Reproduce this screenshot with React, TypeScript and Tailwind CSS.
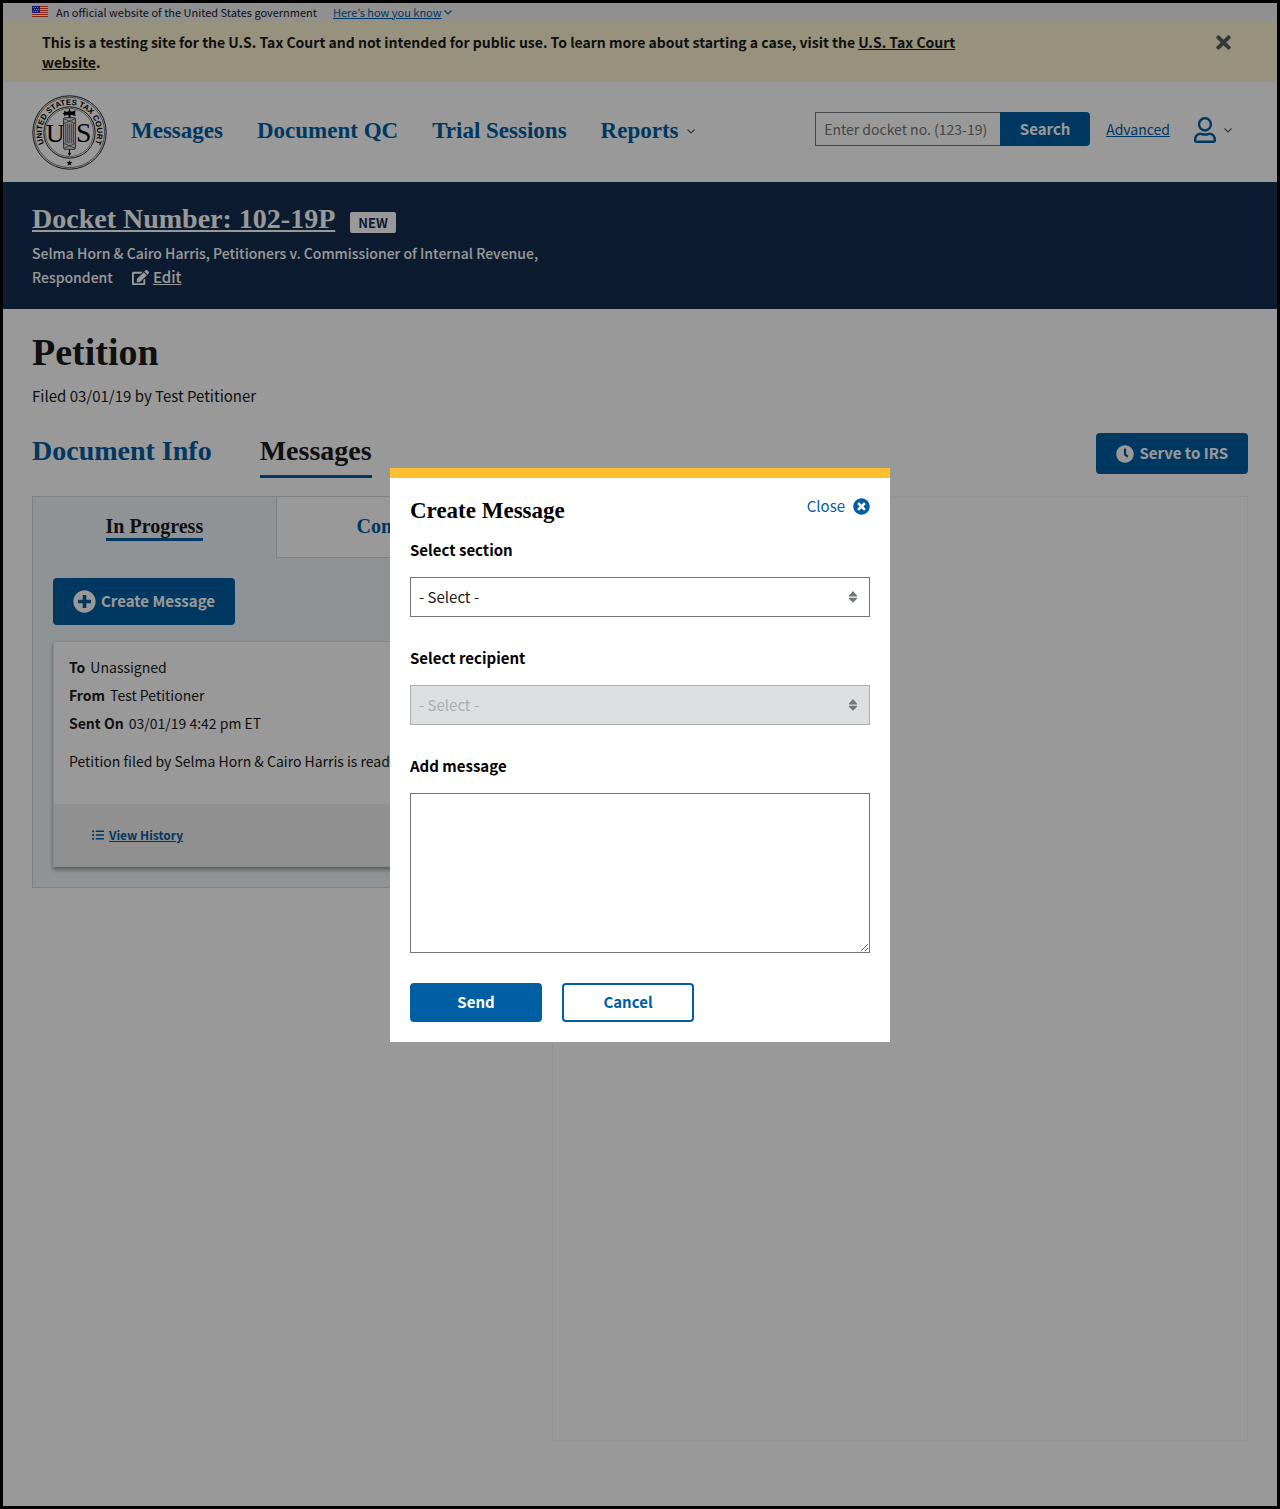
import type { ReactNode } from 'react';
import {
  FaClock,
  FaEdit,
  FaListUl,
  FaPlusCircle,
  FaRegUser,
  FaTimes,
  FaTimesCircle,
} from 'react-icons/fa';

function Chevron({ className }: { className: string }) {
  return (
    <svg className={className} viewBox="0 0 8 5" fill="none" stroke="currentColor" strokeWidth="1.1" aria-hidden="true">
      <path d="M0.5 0.5 L4 4 L7.5 0.5" />
    </svg>
  );
}

function Flag() {
  return (
    <svg className="mb-px h-[11px] w-4 shrink-0" viewBox="0 0 16 11" shapeRendering="crispEdges" aria-hidden="true">
      <rect width="16" height="11" fill="#fff" />
      {[0, 2, 4, 6, 8, 10].map((y) => (
        <rect key={y} y={y} width="16" height="1" fill="#db3e1f" />
      ))}
      <rect width="8" height="7" fill="#1e33b1" />
      {[1, 3, 5].map((y) =>
        [1, 3, 5].map((x) => <rect key={`${x}-${y}`} x={x + (y === 3 ? 1 : 0)} y={y} width="1" height="1" fill="#cfd6f5" />),
      )}
    </svg>
  );
}

function Seal() {
  return (
    <svg className="size-[75px] shrink-0" viewBox="0 0 76 76" role="img" aria-label="United States Tax Court seal">
      <defs>
        <path id="seal-ring" d="M 15.1 54.1 A 28 28 0 1 1 60.9 54.1" />
      </defs>
      <g fill="none" stroke="#1b1b1b">
        <circle cx="38" cy="38" r="37.2" strokeWidth="1" />
        <circle cx="38" cy="38" r="35.6" strokeWidth="0.6" />
        <circle cx="38" cy="38" r="26" strokeWidth="1" />
        <circle cx="38" cy="38" r="24.4" strokeWidth="0.5" />
      </g>
      <text fontFamily="Liberation Sans" fontWeight="700" fontSize="8" fill="#000">
        <textPath href="#seal-ring" startOffset="50%" textAnchor="middle">
          UNITED STATES TAX COURT
        </textPath>
      </text>
      <text x="23.5" y="47.5" textAnchor="middle" fontFamily="Liberation Serif" fontSize="26" fill="#000">
        U
      </text>
      <text x="52.5" y="47.5" textAnchor="middle" fontFamily="Liberation Serif" fontSize="28" fill="#000">
        S
      </text>
      <rect x="32" y="23" width="12" height="32" rx="1.5" fill="#e4e4e4" stroke="#333" strokeWidth="0.9" />
      <path
        d="M34.2 29v20M36.2 29v20M38.2 29v20M40.2 29v20M42 29v20M32 24l12 5M44 24l-12 5M32 49l12 5M44 49l-12 5"
        stroke="#333"
        strokeWidth="0.7"
        fill="none"
      />
      <path d="M38 13.5l1.2 3.2h1.8l3.2-1.2c-.6 2-.6 4.4 0 6l-3.2-1.2h-2v2.500h-2v-2.500h-2l-2.500 1-.2-1.600-1.300-.9 1.300-.9.2-1.600 2.500.6h1.600z" fill="#000" />
      <path d="M37.5 55h1v3l1.200 1.300-1.700 2.200-1.700-2.200 1.200-1.300z" fill="#000" />
      <path d="M38 66l.8 2h2.200l-1.700 1.400.6 2.200-1.900-1.300-1.900 1.300.6-2.200-1.700-1.400h2.200z" fill="#000" />
    </svg>
  );
}

function SortArrows() {
  return (
    <svg className="pointer-events-none absolute top-3.5 right-[13px] h-3 w-2" viewBox="0 0 8 12" fill="#71767a" aria-hidden="true">
      <path d="M4 0L8 4.6v.9H0v-.9zM0 6.800h8v.9L4 11.700 0 7.700z" />
    </svg>
  );
}

function NavLink({ children }: { children: ReactNode }) {
  return (
    <a href="#" className="flex items-center gap-2 text-[#005ea2]">
      {children}
    </a>
  );
}

function SelectField({ id, label, disabled = false }: { id: string; label: string; disabled?: boolean }) {
  return (
    <div className="mb-[30px]">
      <label htmlFor={id} className="mb-4 block leading-[22px] font-bold">
        {label}
      </label>
      <div className="relative">
        <select
          id={id}
          disabled={disabled}
          className="block h-10 w-full appearance-none border border-[#71767a] bg-white px-2 pt-0.5 text-[15px] text-[#1b1b1b] opacity-100 disabled:border-[#a9aeb1] disabled:bg-[#dcdee0] disabled:text-[#a9aeb1]"
        >
          <option>- Select -</option>
        </select>
        <SortArrows />
      </div>
    </div>
  );
}

function CreateMessageDialog() {
  return (
    <div className="fixed inset-0 flex items-center justify-center bg-black/40">
      <div
        role="dialog"
        aria-modal="true"
        aria-labelledby="dialog-title"
        className="w-full max-w-[500px] border-t-10 border-[#ffbe2e] bg-white p-5 text-[15px] text-black"
      >
        <div className="mb-[15px] flex items-start justify-between">
          <h3 id="dialog-title" className="font-['Liberation_Serif',serif] text-[23px] leading-[26px] font-bold">
            Create Message
          </h3>
          <button type="button" className="flex items-center gap-2 leading-4 text-[#005ea2]">
            Close
            <FaTimesCircle className="size-[17px]" />
          </button>
        </div>
        <SelectField id="section" label="Select section" />
        <SelectField id="recipient" label="Select recipient" disabled />
        <label htmlFor="message" className="mb-4 block leading-[22px] font-bold">
          Add message
        </label>
        <textarea id="message" className="block h-40 w-full resize border border-[#71767a] bg-white p-2" />
        <div className="mt-[30px] flex gap-5 leading-[33px] font-bold">
          <button type="button" className="w-[132px] rounded border-2 border-[#005ea2] bg-[#005ea2] pb-0.5 text-white">
            Send
          </button>
          <button type="button" className="w-[132px] rounded border-2 border-[#005ea2] pb-0.5 text-[#005ea2]">
            Cancel
          </button>
        </div>
      </div>
    </div>
  );
}

function Header() {
  return (
    <header>
      <div className="flex h-[19px] items-center bg-[#f0f0f0] px-[29px] pb-px text-[11px]">
        <Flag />
        <p className="ml-2">An official website of the United States government</p>
        <button type="button" className="ml-4 flex items-center gap-0.5 text-[#005ea2]">
          <span className="underline">Here’s how you know</span>
          <Chevron className="h-[5px] w-2" />
        </button>
      </div>
      <div className="flex items-start justify-between bg-[#faf3d1] py-2.5 pr-[43px] pl-[39px]">
        <p className="max-w-[960px] text-[14px] leading-5 font-bold">
          This is a testing site for the U.S. Tax Court and not intended for public use. To learn more about starting a
          case, visit the{' '}
          <a href="#" className="underline">
            U.S. Tax Court website
          </a>
          .
        </p>
        <button type="button" aria-label="Dismiss" className="text-[#565c65]">
          <FaTimes className="size-[21px]" />
        </button>
      </div>
      <div className="flex h-[100px] items-center justify-between px-[29px]">
        <div className="flex items-center gap-6">
          <Seal />
          <nav className="mb-0.5 flex gap-[34px] font-['Liberation_Serif',serif] text-[23px] leading-6 font-bold">
            <NavLink>Messages</NavLink>
            <NavLink>Document QC</NavLink>
            <NavLink>Trial Sessions</NavLink>
            <NavLink>
              Reports
              <Chevron className="h-[5px] w-2 text-[#565c65]" />
            </NavLink>
          </nav>
        </div>
        <div className="mr-4 mb-1.5 flex items-center text-[14px]">
          <form className="flex h-[34px]">
            <input
              type="text"
              aria-label="Docket number"
              placeholder="Enter docket no. (123-19)"
              className="w-[185px] border border-r-0 border-[#71767a] bg-white px-2 placeholder:text-[#757575]"
            />
            <button type="submit" className="w-[90px] rounded-r bg-[#005ea2] text-[15px] font-bold text-white">
              Search
            </button>
          </form>
          <a href="#" className="ml-4 text-[#005ea2] underline">
            Advanced
          </a>
          <button type="button" aria-label="Account" className="mt-0.5 ml-6 flex items-center gap-2 text-[#005ea2]">
            <FaRegUser className="h-[26px] w-[22px]" preserveAspectRatio="none" />
            <Chevron className="h-[5px] w-2 text-[#565c65]" />
          </button>
        </div>
      </div>
    </header>
  );
}

function MessageCard() {
  return (
    <article className="mt-4 border border-[#dfe1e2] bg-white text-[14px] shadow-[0_3px_4px_0_rgba(0,0,0,0.35)]">
      <div className="px-[15px] pt-[11px] pb-[29px] leading-7">
        <p>
          <b className="mr-[5px]">To</b>Unassigned
        </p>
        <p>
          <b className="mr-[5px]">From</b>Test Petitioner
        </p>
        <p>
          <b className="mr-[5px]">Sent On</b>03/01/19 4:42 pm ET
        </p>
        <p className="mt-2.5 truncate">Petition filed by Selma Horn &amp; Cairo Harris is ready for review.</p>
      </div>
      <footer className="flex h-[62px] items-center bg-[#f0f0f0] px-[38px] text-[12px] font-bold text-[#005ea2]">
        <a href="#" className="flex items-center gap-[5px]">
          <FaListUl className="size-3" />
          <span className="underline">View History</span>
        </a>
      </footer>
    </article>
  );
}

export default function App() {
  return (
    <div className="flex min-h-screen flex-col border-[3px] border-black bg-white font-['Noto_Sans_CJK_KR',sans-serif] text-[15px] text-[#1b1b1b]">
      <Header />
      <section className="bg-[#162e51] px-[29px] pt-[17px] pb-5 text-white">
        <div className="flex items-end gap-[15px]">
          <h1 className="font-['Liberation_Serif',serif] text-[28px] leading-10 font-bold">
            <a href="#" className="underline">
              Docket Number: 102-19P
            </a>
          </h1>
          <span className="mb-1.5 rounded-xs bg-white px-2 text-[13px] leading-[21px] font-bold text-[#162e51]">NEW</span>
        </div>
        <p className="mt-0.5 max-w-[540px] text-[14px] leading-6 font-medium">
          Selma Horn &amp; Cairo Harris, Petitioners v. Commissioner of Internal Revenue, Respondent
          <a href="#" className="ml-[19px] inline-flex h-6 items-center gap-1 align-bottom text-[15px]">
            <FaEdit className="size-[17px]" />
            <span className="underline">Edit</span>
          </a>
        </p>
      </section>
      <main className="flex flex-1 flex-col px-[29px] pb-[65px]">
        <h2 className="mt-[21px] font-['Liberation_Serif',serif] text-[38px] leading-11 font-bold">Petition</h2>
        <p className="mt-2.5 leading-6">Filed 03/01/19 by Test Petitioner</p>
        <div className="mt-[25px] mb-[18px] flex items-start justify-between">
          <div className="flex gap-12 font-['Liberation_Serif',serif] text-[28px] leading-9 font-bold">
            <button type="button" className="border-b-3 border-transparent pb-1.5 text-[#005ea2]">
              Document Info
            </button>
            <button type="button" className="border-b-3 border-[#005ea2] pb-1.5">
              Messages
            </button>
          </div>
          <button
            type="button"
            className="flex h-[41px] items-center gap-[5px] rounded bg-[#005ea2] px-5 font-bold text-white"
          >
            <FaClock className="size-[18px]" />
            Serve to IRS
          </button>
        </div>
        <div className="grid flex-1 grid-cols-[7fr_10fr] gap-8">
          <section className="self-start border border-[#d0d7de] bg-[#eff6fb]">
            <div className="grid grid-cols-2 font-['Liberation_Serif',serif] text-[20px] leading-6 font-bold">
              <button type="button" className="flex h-[61px] items-center justify-center">
                <span className="border-b-3 border-[#005ea2]">In Progress</span>
              </button>
              <button
                type="button"
                className="flex h-[61px] items-center justify-center border-b border-l border-[#d0d7de] bg-white text-[#005ea2]"
              >
                <span className="border-b-3 border-transparent">Complete</span>
              </button>
            </div>
            <div className="p-5">
              <button
                type="button"
                className="flex h-[47px] items-center gap-[5px] rounded bg-[#005ea2] px-5 font-bold text-white"
              >
                <FaPlusCircle className="size-[23px]" />
                Create Message
              </button>
              <MessageCard />
            </div>
          </section>
          <section aria-label="Document preview" className="border border-[#f0f0f0]" />
        </div>
      </main>
      <CreateMessageDialog />
    </div>
  );
}
